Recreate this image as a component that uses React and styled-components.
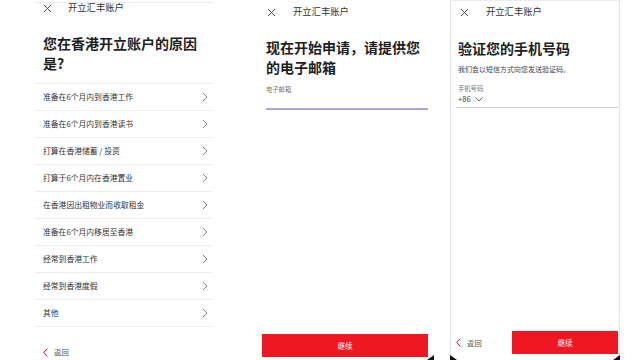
import React from "react";
import styled, { createGlobalStyle } from "styled-components";

const Global = createGlobalStyle`
  html, body { margin: 0; padding: 0; background: #fff; }
  body { font-family: "Noto Sans CJK SC", "Noto Sans", sans-serif; }
  #root { width: 640px; height: 360px; overflow: hidden; }
`;

const Stage = styled.div`
  display: flex;
  width: 640px;
  height: 360px;
  background: #fff;
  overflow: hidden;
`;

const Panel = styled.div`
  position: relative;
  width: ${(p) => p.$w}px;
  height: 360px;
  box-sizing: border-box;
  padding-left: ${(p) => p.$pl}px;
  padding-right: ${(p) => p.$pr || 0}px;
  display: flex;
  flex-direction: column;
`;

const Card = styled.div`
  flex: 1;
  display: flex;
  flex-direction: column;
  box-sizing: border-box;
  border-top: 1px solid #ececec;
  border-left: ${(p) => (p.$sides ? "1px solid #e6e6e6" : "none")};
  border-right: ${(p) => (p.$sides ? "1px solid #e3e3e3" : "none")};
  margin-top: ${(p) => p.$mt || 0}px;
  padding-left: ${(p) => p.$pl || 0}px;
`;

const Plain = styled.div`
  flex: 1;
  display: flex;
  flex-direction: column;
`;

const Header = styled.div`
  display: flex;
  align-items: center;
  height: ${(p) => p.$h}px;
  margin-top: ${(p) => p.$mt}px;
  padding-left: ${(p) => p.$pl || 0}px;
  gap: ${(p) => p.$gap}px;
`;

const Title = styled.span`
  font-size: 9.3px;
  line-height: 1;
  color: #333;
  white-space: nowrap;
`;

const Heading = styled.h1`
  margin: ${(p) => p.$mt}px 0 0 ${(p) => p.$ml || 0}px;
  font-size: 14px;
  line-height: ${(p) => p.$lh || 20}px;
  font-weight: 700;
  color: #1e1e1e;
  width: ${(p) => p.$w}px;
`;

const List = styled.div`
  margin-top: 10px;
  display: flex;
  flex-direction: column;
  width: 177px;
`;

const Row = styled.div`
  height: 26px;
  border-top: 1px solid #ececec;
  display: flex;
  align-items: center;
  justify-content: space-between;
  padding: 0 4px 0 8px;
  &:last-child { border-bottom: 1px solid #ececec; }
`;

const RowText = styled.span`
  font-size: 7.8px;
  color: #333;
  line-height: 1;
`;

const Back = styled.div`
  display: flex;
  align-items: center;
  gap: 6px;
  height: 10px;
  margin-top: ${(p) => p.$mt || 0}px;
  margin-left: ${(p) => p.$ml || 0}px;
  padding-left: ${(p) => p.$pl || 0}px;
`;

const BackText = styled.span`
  font-size: 7.4px;
  color: #555;
  line-height: 1;
`;

const Label = styled.div`
  margin-top: ${(p) => p.$mt}px;
  margin-left: ${(p) => p.$ml || 0}px;
  font-size: 6.3px;
  line-height: 8px;
  color: #777;
`;

const Sub = styled.div`
  margin-top: 6px;
  font-size: 7px;
  line-height: 10px;
  color: #444;
  white-space: nowrap;
`;

const Field = styled.div`
  width: ${(p) => p.$w}px;
  height: ${(p) => p.$h}px;
  margin-left: ${(p) => p.$ml || 0}px;
  border-bottom: ${(p) => p.$bw}px solid ${(p) => p.$c};
  display: flex;
  align-items: flex-end;
  padding-left: ${(p) => p.$pl || 0}px;
  box-sizing: content-box;
`;

const Code = styled.span`
  display: flex;
  align-items: center;
  gap: 4px;
  font-size: 7.6px;
  line-height: 10px;
  color: #444;
  margin-top: 2px;
  padding-bottom: 3px;
`;

const Button = styled.div`
  width: ${(p) => p.$w}px;
  height: 23px;
  background: #ee1822;
  color: #fff;
  font-size: 7.6px;
  display: flex;
  align-items: center;
  justify-content: center;
  margin-left: ${(p) => p.$ml || 0}px;
`;

const Footer = styled.div`
  margin-top: auto;
  margin-bottom: ${(p) => p.$mb}px;
  display: flex;
  align-items: center;
  justify-content: ${(p) => p.$justify || "flex-start"};
  padding-right: ${(p) => p.$pr || 0}px;
`;

const Corner = styled.div`
  position: absolute;
  bottom: 0;
  ${(p) => (p.$right ? "right" : "left")}: ${(p) => p.$x}px;
  width: 7px;
  height: 5px;
  background: #111;
  clip-path: ${(p) =>
    p.$right ? "polygon(100% 0, 100% 100%, 0 100%)" : "polygon(0 0, 100% 100%, 0 100%)"};
`;

const Close = () => (
  <svg width="9" height="9" viewBox="0 0 9 9">
    <path d="M1 1 L8 8 M8 1 L1 8" stroke="#555" strokeWidth="1" fill="none" />
  </svg>
);

const Chevron = () => (
  <svg width="6" height="10" viewBox="0 0 6 10">
    <path d="M1 1 L5 5 L1 9" stroke="#777" strokeWidth="0.9" fill="none" />
  </svg>
);

const BackChevron = () => (
  <svg width="5" height="9" viewBox="0 0 5 9">
    <path d="M4.3 0.6 L0.8 4.5 L4.3 8.4" stroke="#c8102e" strokeWidth="1" fill="none" />
  </svg>
);

const Down = () => (
  <svg width="8" height="5" viewBox="0 0 8 5">
    <path d="M0.6 0.6 L4 4 L7.4 0.6" stroke="#555" strokeWidth="0.9" fill="none" />
  </svg>
);

const reasons = [
  "准备在6个月内到香港工作",
  "准备在6个月内到香港读书",
  "打算在香港储蓄 / 投资",
  "打算于6个月内在香港置业",
  "在香港因出租物业而收取租金",
  "准备在6个月内移居至香港",
  "经常到香港工作",
  "经常到香港度假",
  "其他",
];

export default function App() {
  return (
    <>
      <Global />
      <Stage>
        <Panel $w={220} $pl={35} $pr={7}>
          <Card $mt={2}>
            <Header $h={10} $mt={0} $pl={8} $gap={16}>
              <Close />
              <Title>开立汇丰账户</Title>
            </Header>
            <Heading $mt={20} $ml={8} $w={160}>
              您在香港开立账户的原因是?
            </Heading>
            <List>
              {reasons.map((r) => (
                <Row key={r}>
                  <RowText>{r}</RowText>
                  <Chevron />
                </Row>
              ))}
            </List>
            <Back $mt={20} $pl={8}>
              <BackChevron />
              <BackText>返回</BackText>
            </Back>
          </Card>
        </Panel>

        <Panel $w={220} $pl={46}>
          <Plain>
            <Header $h={12} $mt={6} $pl={1} $gap={17}>
              <Close />
              <Title>开立汇丰账户</Title>
            </Header>
            <Heading $mt={20} $lh={19.5} $w={160}>
              现在开始申请，请提供您的电子邮箱
            </Heading>
            <Label $mt={9}>电子邮箱</Label>
            <Field $w={162} $h={14} $bw={2} $c="#aaa6dc" />
            <Footer $mb={3}>
              <Button $w={166} $ml={-4}>继续</Button>
            </Footer>
          </Plain>
          <Corner $right $x={6} />
        </Panel>

        <Panel $w={200} $pl={10} $pr={20}>
          <Card $sides $pl={7}>
            <Header $h={12} $mt={5} $pl={2} $gap={17}>
              <Close />
              <Title>开立汇丰账户</Title>
            </Header>
            <Heading $mt={20} $w={160}>
              验证您的手机号码
            </Heading>
            <Sub>我们会以短信方式向您发送验证码。</Sub>
            <Label $mt={11}>手机号码</Label>
            <Field $w={160} $h={14} $bw={1} $c="#cfcfcf" $ml={-2} $pl={2}>
              <Code>
                +86 <Down />
              </Code>
            </Field>
            <Footer $mb={6} $justify="space-between" $pr={1}>
              <Back $ml={-2}>
                <BackChevron />
                <BackText>返回</BackText>
              </Back>
              <Button $w={106}>继续</Button>
            </Footer>
          </Card>
          <Corner $x={10} />
          <Corner $right $x={20} />
        </Panel>
      </Stage>
    </>
  );
}
